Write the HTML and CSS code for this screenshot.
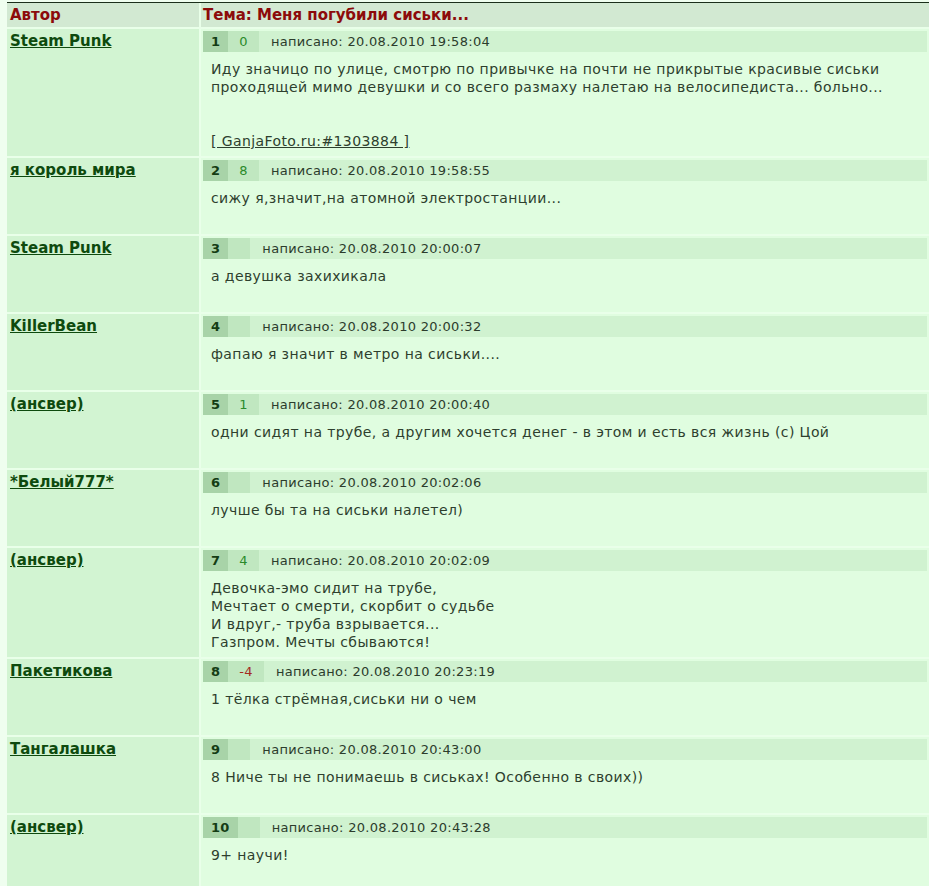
FILE: index.html
```html
<!DOCTYPE html>
<html lang="ru">
<head>
    <meta charset="UTF-8">
    <title>Тема: Меня погубили сиськи...</title>
    <link rel="stylesheet" href="styles.css">
</head>
<body>
    <div class="thread">
        <!-- заголовок темы -->
        <div class="th-author">Автор</div>
        <div class="th-topic">Тема: Меня погубили сиськи...</div>

        <div class="author"><a href="#">Steam Punk</a></div>
        <div class="post">
            <div class="post-head"><span class="num">1</span><span class="rate">0</span><span class="date">написано: 20.08.2010 19:58:04</span></div>
            <div class="post-text">Иду значицо по улице, смотрю по привычке на почти не прикрытые красивые сиськи проходящей мимо девушки и со всего размаху налетаю на велосипедиста... больно...<br><br><br><a href="#" class="src">[ GanjaFoto.ru:#1303884 ]</a></div>
        </div>

        <div class="author"><a href="#">я король мира</a></div>
        <div class="post">
            <div class="post-head"><span class="num">2</span><span class="rate">8</span><span class="date">написано: 20.08.2010 19:58:55</span></div>
            <div class="post-text">сижу я,значит,на атомной электростанции...</div>
        </div>

        <div class="author"><a href="#">Steam Punk</a></div>
        <div class="post">
            <div class="post-head"><span class="num">3</span><span class="rate"></span><span class="date">написано: 20.08.2010 20:00:07</span></div>
            <div class="post-text">а девушка захихикала</div>
        </div>

        <div class="author"><a href="#">KillerBean</a></div>
        <div class="post">
            <div class="post-head"><span class="num">4</span><span class="rate"></span><span class="date">написано: 20.08.2010 20:00:32</span></div>
            <div class="post-text">фапаю я значит в метро на сиськи....</div>
        </div>

        <div class="author"><a href="#">(ансвер)</a></div>
        <div class="post">
            <div class="post-head"><span class="num">5</span><span class="rate">1</span><span class="date">написано: 20.08.2010 20:00:40</span></div>
            <div class="post-text">одни сидят на трубе, а другим хочется денег - в этом и есть вся жизнь (с) Цой</div>
        </div>

        <div class="author"><a href="#">*Белый777*</a></div>
        <div class="post">
            <div class="post-head"><span class="num">6</span><span class="rate"></span><span class="date">написано: 20.08.2010 20:02:06</span></div>
            <div class="post-text">лучше бы та на сиськи налетел)</div>
        </div>

        <div class="author"><a href="#">(ансвер)</a></div>
        <div class="post">
            <div class="post-head"><span class="num">7</span><span class="rate">4</span><span class="date">написано: 20.08.2010 20:02:09</span></div>
            <div class="post-text">Девочка-эмо сидит на трубе,<br>Мечтает о смерти, скорбит о судьбе<br>И вдруг,- труба взрывается...<br>Газпром. Мечты сбываются!</div>
        </div>

        <div class="author"><a href="#">Пакетикова</a></div>
        <div class="post">
            <div class="post-head"><span class="num">8</span><span class="rate minus">-4</span><span class="date">написано: 20.08.2010 20:23:19</span></div>
            <div class="post-text">1 тёлка стрёмная,сиськи ни о чем</div>
        </div>

        <div class="author"><a href="#">Тангалашка</a></div>
        <div class="post">
            <div class="post-head"><span class="num">9</span><span class="rate"></span><span class="date">написано: 20.08.2010 20:43:00</span></div>
            <div class="post-text">8 Ниче ты не понимаешь в сиськах! Особенно в своих))</div>
        </div>

        <div class="author"><a href="#">(ансвер)</a></div>
        <div class="post">
            <div class="post-head"><span class="num">10</span><span class="rate"></span><span class="date">написано: 20.08.2010 20:43:28</span></div>
            <div class="post-text">9+ научи!</div>
        </div>
    </div>
</body>
</html>
```

FILE: styles.css
```css
body {
    margin: 0;
    padding: 2px 0 0 7px;
    background-color: #effeef;
    font-family: "DejaVu Sans", Verdana, sans-serif;
    color: #2e3f2e;
}
.thread {
    display: grid;
    grid-template-columns: 192px 1fr;
    gap: 2px;
    background-color: #e9ffe9;
    border-top: 1px solid #1b2f1b;
}
.th-author,
.th-topic {
    background-color: #d2e9d2;
    color: #8c0b0b;
    font-size: 15px;
    font-weight: bold;
    height: 24px;
    line-height: 24px;
}
.th-author {
    padding-left: 3px;
}
.th-topic {
    padding-left: 2px;
}
.author {
    background-color: #d2f4d2;
    padding: 2px 3px;
    min-height: 72px;
}
.author a {
    color: #0e4a0e;
    font-size: 15px;
    font-weight: bold;
    line-height: 18px;
}
.post {
    background-color: #e0fde0;
    padding: 2px;
    min-height: 72px;
}
.post-head {
    display: flex;
    height: 21px;
    align-items: stretch;
    background-color: #d0f2d0;
    font-size: 13px;
    letter-spacing: 0.3px;
    line-height: 21px;
}
.post-head .num {
    background-color: #a8d3a8;
    color: #143c14;
    font-weight: bold;
    padding: 0 8px;
}
.post-head .rate {
    background-color: #c0e7c0;
    color: #2b8a2b;
    padding: 0 11px;
}
.post-head .rate.minus {
    color: #a52a1f;
}
.post-head .date {
    margin-left: 12px;
    color: #2c3c2c;
}
.post-text {
    padding: 8px 8px 4px;
    font-size: 14px;
    letter-spacing: 0.4px;
    line-height: 18px;
}
.post-text .src {
    color: #2e3f2e;
}
```
